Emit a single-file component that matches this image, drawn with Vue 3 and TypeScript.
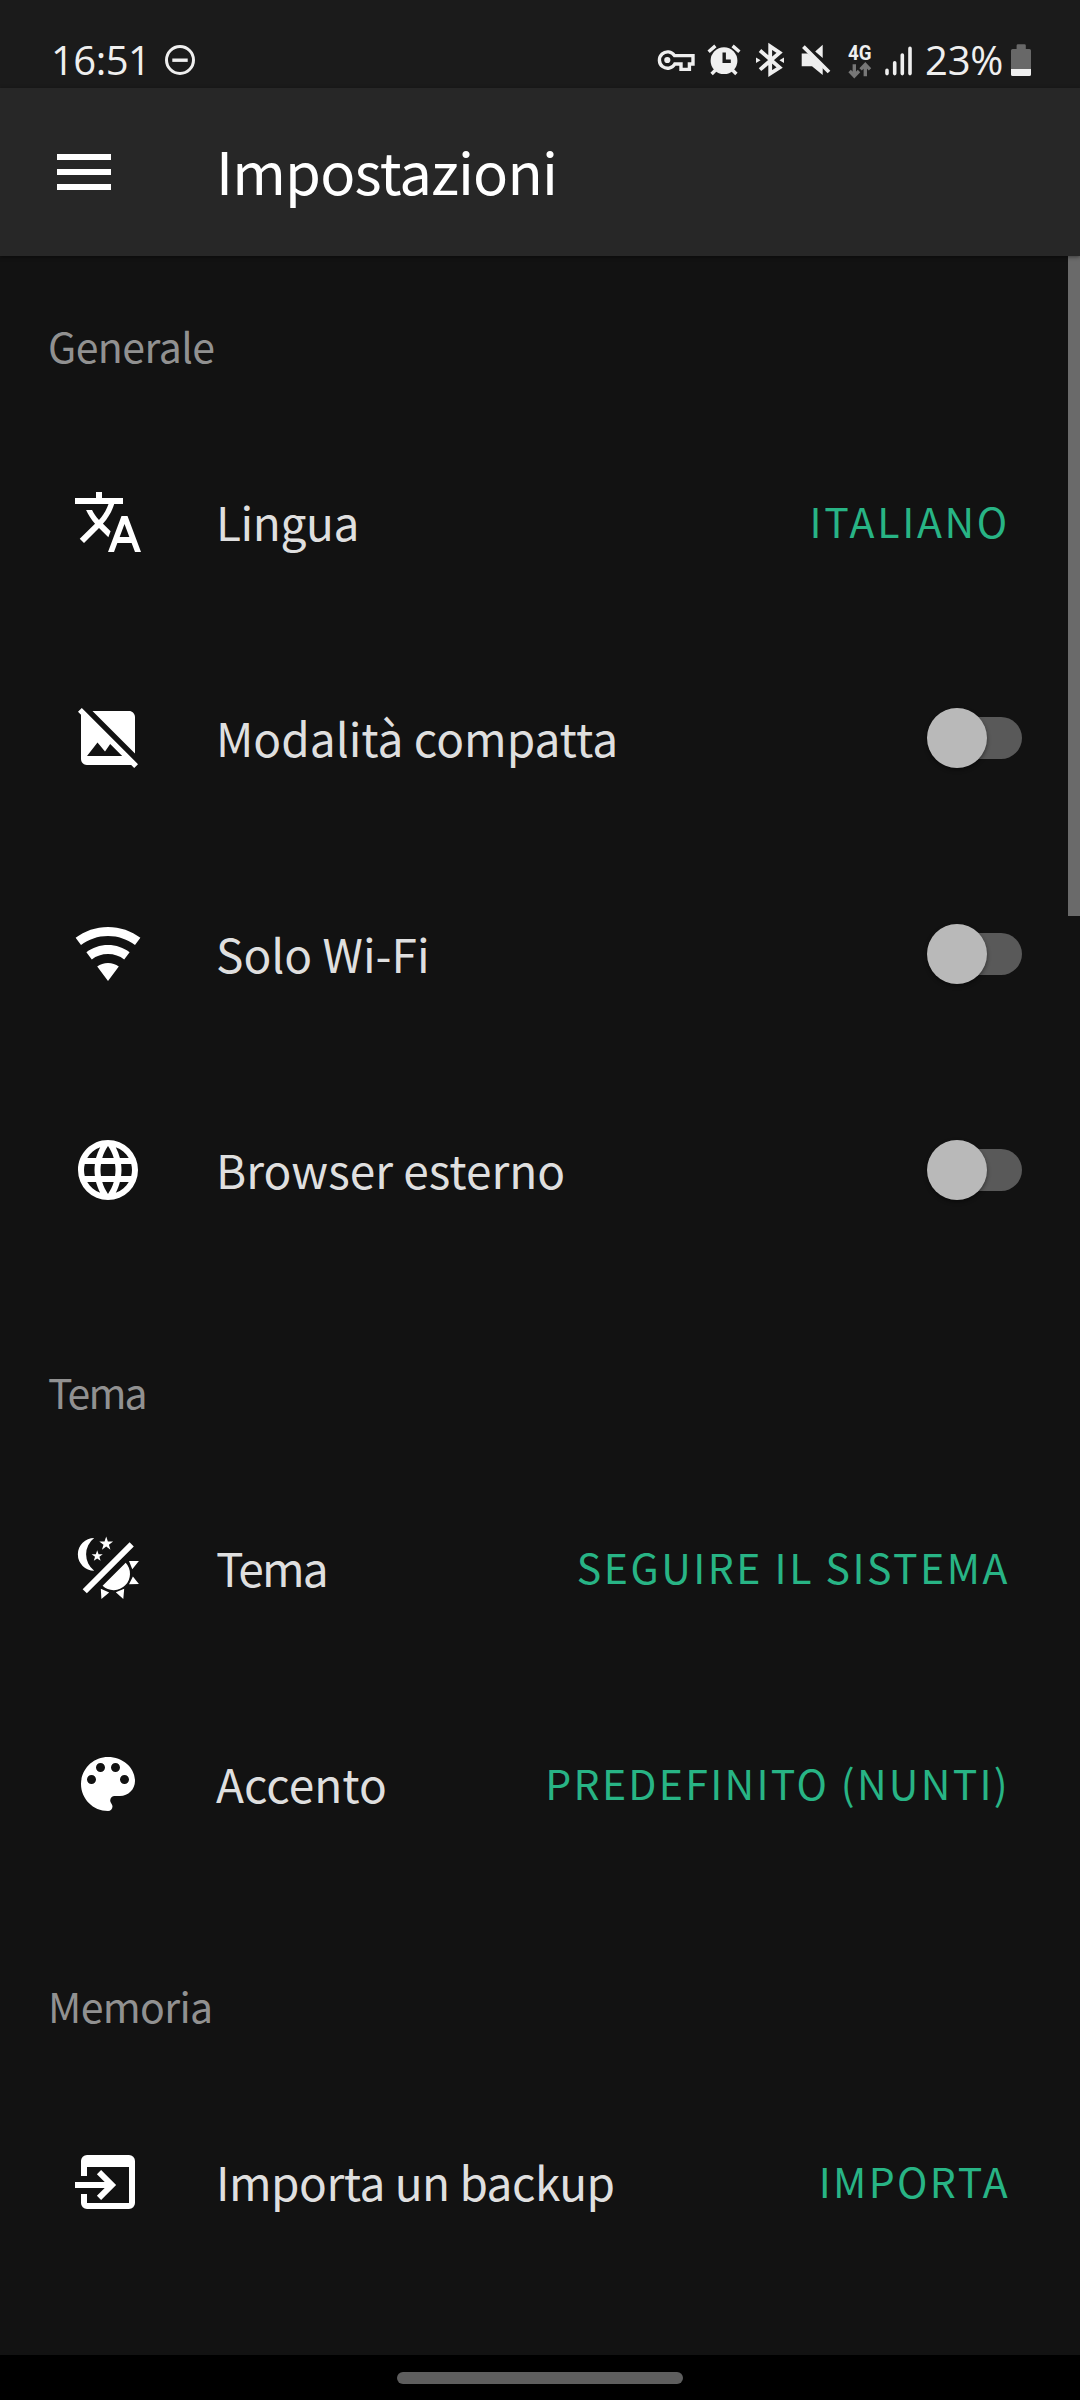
<script setup lang="ts">
import { ref } from 'vue'

interface Item {
  icon: string
  label: string
  tracking: number
  action?: string
  actionTracking?: number
}

interface Section {
  title: string
  tracking: number
  items: Item[]
}

const icons: Record<string, string> = {
  translate:
    'M12.87 15.07l-2.54-2.51.03-.03c1.74-1.94 2.98-4.17 3.71-6.53H17V4h-7V2H8v2H1v1.99h11.17C11.5 7.92 10.44 9.75 9 11.35 8.07 10.32 7.3 9.19 6.69 8h-2c.73 1.63 1.73 3.17 2.98 4.56l-5.09 5.02L4 19l5-5 3.11 3.11.76-2.04zM18.5 10h-2L12 22h2l1.12-3h4.75L21 22h2l-4.5-12zm-2.62 7l1.62-4.33L19.12 17h-3.24z',
  imageOff:
    'M2 3.27L3.27 2 22 20.73 20.73 22l-1-1H5c-1.1 0-2-.9-2-2V4.27zM5 18h11.73l-4-4L11 16.51 8.5 13.5zM6.83 3H19c1.1 0 2 .9 2 2v12.17z',
  wifi:
    'M12 21l3.6-4.8C14.6 15.45 13.35 15 12 15s-2.6.45-3.6 1.2L12 21M12 3C7.95 3 4.21 4.34 1.2 6.6L3 9c2.5-1.88 5.62-3 9-3s6.5 1.12 9 3l1.8-2.4C19.79 4.34 16.05 3 12 3M12 9c-2.7 0-5.19.89-7.2 2.4l1.8 2.4C8.1 12.67 9.97 12 12 12s3.9.67 5.4 1.8l1.8-2.4C17.19 9.89 14.7 9 12 9z',
  web:
    'M16.36,14C16.44,13.34 16.5,12.68 16.5,12C16.5,11.32 16.44,10.66 16.36,10H19.74C19.9,10.64 20,11.31 20,12C20,12.69 19.9,13.36 19.74,14M14.59,19.56C15.19,18.45 15.65,17.25 15.97,16H18.92C17.96,17.65 16.43,18.93 14.59,19.56M14.34,14H9.66C9.56,13.34 9.5,12.68 9.5,12C9.5,11.32 9.56,10.65 9.66,10H14.34C14.43,10.65 14.5,11.32 14.5,12C14.5,12.68 14.43,13.34 14.34,14M12,19.96C11.17,18.76 10.5,17.43 10.09,16H13.91C13.5,17.43 12.83,18.76 12,19.96M8,8H5.08C6.03,6.34 7.57,5.06 9.4,4.44C8.8,5.55 8.35,6.75 8,8M5.08,16H8C8.35,17.25 8.8,18.45 9.4,19.56C7.57,18.93 6.03,17.65 5.08,16M4.26,14C4.1,13.36 4,12.69 4,12C4,11.31 4.1,10.64 4.26,10H7.64C7.56,10.66 7.5,11.32 7.5,12C7.5,12.68 7.56,13.34 7.64,14M12,4.03C12.83,5.23 13.5,6.57 13.91,8H10.09C10.5,6.57 11.17,5.23 12,4.03M18.92,8H15.97C15.65,6.75 15.19,5.55 14.59,4.44C16.43,5.07 17.96,6.34 18.92,8M12,2C6.47,2 2,6.5 2,12A10,10 0 0,0 12,22A10,10 0 0,0 22,12A10,10 0 0,0 12,2Z',
  theme:
    'M7.4 2A5.45 5.45 0 0 0 7.4 12.9A6.85 6.85 0 0 1 7.4 2zM11.4 1.5l.56 1.65 1.74.02-1.4 1.04.52 1.67-1.42-1.01-1.42 1.01.52-1.67-1.4-1.04 1.74-.02zM8.4 6.1l.45 1.3 1.4.03-1.12.84.4 1.33-1.13-.8-1.13.8.4-1.33-1.12-.84 1.4-.03zM19.2 3.4l1.4 1.4L4.95 20.45l-1.4-1.4zM17.9 10.25A5.45 5.45 0 0 1 10.2 17.95zM19 9.7h3.3l-2.2 2.7zM20.3 14.8l2 2.5-3.3.1zM17.4 18.9l-.3 3.4-2.5-2.2zM9.6 18.9l2.8 1.3-2.6 2.1z',
  palette:
    'M12 3c-4.97 0-9 4.03-9 9s4.03 9 9 9c.83 0 1.5-.67 1.5-1.5 0-.39-.15-.74-.39-1.01-.23-.26-.38-.61-.38-.99 0-.83.67-1.5 1.5-1.5H16c2.76 0 5-2.24 5-5 0-4.42-4.03-8-9-8zm-5.5 9c-.83 0-1.5-.67-1.5-1.5S5.67 9 6.5 9 8 9.67 8 10.5 7.33 12 6.5 12zm3-4C8.67 8 8 7.33 8 6.5S8.67 5 9.5 5s1.5.67 1.5 1.5S10.33 8 9.5 8zm5 0c-.83 0-1.5-.67-1.5-1.5S13.67 5 14.5 5s1.5.67 1.5 1.5S15.33 8 14.5 8zm3 4c-.83 0-1.5-.67-1.5-1.5S16.67 9 17.5 9s1.5.67 1.5 1.5-.67 1.5-1.5 1.5z',
  importBox:
    'M21 5v14a2 2 0 0 1-2 2H5a2 2 0 0 1-2-2v-3h2v3h14V7H5v3H3V5a2 2 0 0 1 2-2h14a2 2 0 0 1 2 2zM1 12h9.9L8.3 9.4 9.7 8l5 5-5 5-1.4-1.4L10.9 14H1z'
}

const sections = ref<Section[]>([
  {
    title: 'Generale',
    tracking: -0.55,
    items: [
      { icon: 'translate', label: 'Lingua', tracking: -0.4, action: 'ITALIANO', actionTracking: 2.7 },
      { icon: 'imageOff', label: 'Modalità compatta', tracking: 0 },
      { icon: 'wifi', label: 'Solo Wi-Fi', tracking: 0 },
      { icon: 'web', label: 'Browser esterno', tracking: 0 }
    ]
  },
  {
    title: 'Tema',
    tracking: -1.9,
    items: [
      { icon: 'theme', label: 'Tema', tracking: -1.8, action: 'SEGUIRE IL SISTEMA', actionTracking: 2.5 },
      { icon: 'palette', label: 'Accento', tracking: 0, action: 'PREDEFINITO (NUNTI)', actionTracking: 2.3 }
    ]
  },
  {
    title: 'Memoria',
    tracking: -0.65,
    items: [{ icon: 'importBox', label: 'Importa un backup', tracking: -0.51, action: 'IMPORTA', actionTracking: 2.36 }]
  }
])
</script>

<template>
  <div class="screen">
    <header class="status">
      <span class="clock">16:51</span>
      <svg class="dnd" width="34" height="40" viewBox="163 40 34 40">
        <circle cx="180" cy="60" r="13.5" fill="none" stroke="#efefef" stroke-width="3" />
        <path d="M172.3 60.2h15.4" stroke="#efefef" stroke-width="3.4" />
      </svg>
      <div class="tray">
        <svg width="38" height="40" viewBox="657 40 38 40" fill="none" stroke="#efefef" stroke-width="3.4">
          <path d="M674.5 55.6H693V64H689.4V69.4H681V64H674.8A8.2 8.2 0 1 1 674.5 55.6z" />
          <circle cx="667.3" cy="60" r="3.1" fill="#efefef" stroke="none" />
        </svg>
        <svg class="alarm" width="34" height="40" viewBox="707 40 34 40" fill="none" stroke="#efefef" stroke-width="3.4">
          <circle cx="724" cy="60.7" r="13.4" fill="#efefef" stroke="none" />
          <path d="M708.6 51.8l6.8-5.9M739.4 51.8l-6.8-5.9M711.6 74l5-5M736.4 74l-5-5" />
          <path d="M724.2 52.4V61.3H730.8" stroke="#1b1b1b" />
        </svg>
        <svg class="bluetooth" width="30" height="40" viewBox="755 40 30 40" fill="none" stroke="#efefef" stroke-width="3.8">
          <path d="M760 50.5L779.6 67.6 770.2 73.6V46.4L779.6 52.6 760 69.6" />
          <path d="M756 57.4l4.6 2.8-4.6 2.8zM784 57.4l-4.6 2.8 4.6 2.8z" fill="#efefef" stroke="none" />
        </svg>
        <svg class="mute" width="31" height="40" viewBox="800 40 31 40" fill="#efefef">
          <path d="M801.7 53.5H808L822.7 67V75L812 66.2H801.7zM815.2 51.6L822.7 44.7V58z" />
          <path d="M803.4 46.6L829 72" stroke="#efefef" stroke-width="3.8" />
        </svg>
        <svg class="network" width="26" height="40" viewBox="847 40 26 40">
          <text x="848" y="59.8" textLength="23.5" lengthAdjust="spacingAndGlyphs" class="gen">4G</text>
          <path d="M854.3 64.2V75.5M849.6 71l4.7 5 4.7-5M865.3 76.2V65M860.6 69.4l4.7-5 4.7 5" fill="none" stroke="#777" stroke-width="3.4" />
        </svg>
        <svg class="signal" width="28" height="40" viewBox="885 40 28 40" stroke="#efefef" stroke-width="3.6" stroke-linecap="round">
          <path d="M887 70.4v3.2M894.7 62.8v10.8M902.3 55v18.6M910 48.4v25.2" />
        </svg>
        <span class="percent">23%</span>
        <svg class="battery" width="20" height="40" viewBox="1011 40 20 40">
          <path d="M1016.6 49v-3.4q0-1.4 1.4-1.4h6.4q1.4 0 1.4 1.4V49H1029.4q1.6 0 1.6 1.6V69H1011V50.6q0-1.6 1.6-1.6z" fill="#686868" />
          <path d="M1011 69h20v5.4q0 1.6-1.6 1.6h-16.8q-1.6 0-1.6-1.6z" fill="#efefef" />
        </svg>
      </div>
    </header>

    <div class="appbar">
      <svg class="menu" viewBox="0 0 24 24" fill="#fff"><path d="M3 6h18v2H3zM3 11h18v2H3zM3 16h18v2H3z" /></svg>
      <h1>Impostazioni</h1>
    </div>

    <main class="content">
      <section v-for="section in sections" :key="section.title">
        <h2 :style="{ letterSpacing: section.tracking + 'px' }">{{ section.title }}</h2>
        <div v-for="item in section.items" :key="item.label" class="row">
          <svg class="icon" viewBox="0 0 24 24" fill="#fff"><path :d="icons[item.icon]" fill-rule="evenodd" /></svg>
          <span class="label" :style="{ letterSpacing: item.tracking + 'px' }">{{ item.label }}</span>
          <span v-if="item.action" class="action" :style="{ letterSpacing: item.actionTracking + 'px' }">{{ item.action }}</span>
          <span v-else class="switch"><span class="thumb"></span></span>
        </div>
      </section>
      <div class="scrollbar"></div>
    </main>

    <footer class="navbar"><span class="pill"></span></footer>
  </div>
</template>

<style>
body {
  background: #121212;
}
</style>

<style scoped>
.screen {
  display: flex;
  flex-direction: column;
  width: 1080px;
  height: 2400px;
  overflow: hidden;
  background: #121212;
  font-family: "Noto Sans CJK JP", "Noto Sans", sans-serif;
}

svg {
  display: block;
  flex: none;
}

.status {
  display: flex;
  align-items: center;
  flex: none;
  height: 88px;
  padding: 32px 49px 0;
  box-sizing: border-box;
  background: #1b1b1b;
  color: #efefef;
  font-family: "Open Sans", sans-serif;
  font-size: 40px;
  line-height: 54px;
}

.clock {
  width: 112px;
  padding-left: 2px;
  letter-spacing: -0.5px;
}

.tray {
  display: flex;
  align-items: center;
  margin-left: auto;
}

.alarm { margin-left: 12px; }
.bluetooth { margin-left: 14px; }
.mute { margin-left: 15px; }
.network { margin-left: 16px; }
.signal { margin-left: 12px; }

.gen {
  font: 700 19.5px Roboto, sans-serif;
  fill: #efefef;
}

.percent {
  width: 86px;
  margin-left: 12px;
  letter-spacing: -0.2px;
  white-space: nowrap;
}

.appbar {
  display: flex;
  align-items: center;
  flex: none;
  height: 168px;
  padding-left: 48px;
  box-sizing: border-box;
  background: #272727;
  box-shadow: 0 1px 4px rgba(0, 0, 0, 0.45);
  z-index: 1;
}

.menu {
  width: 72px;
  height: 72px;
}

h1 {
  margin: 0 0 0 96px;
  padding-bottom: 4px;
  color: #fff;
  font-size: 58px;
  font-weight: 400;
  line-height: 84px;
  letter-spacing: -0.8px;
}

.content {
  position: relative;
  flex: 1;
}

h2 {
  margin: 0;
  padding: 80px 0 36px 48px;
  color: #919191;
  font-size: 41px;
  font-weight: 400;
  line-height: 66px;
}

section:first-child h2 {
  padding-top: 56px;
}

.row {
  display: flex;
  align-items: center;
  height: 216px;
  padding: 0 70px 0 72px;
}

.icon {
  width: 72px;
  height: 72px;
}

.label {
  margin-left: 72px;
  padding-bottom: 2px;
  color: #dfdfdf;
  font-size: 46px;
  line-height: 66px;
}

.action {
  margin-left: auto;
  padding-bottom: 4px;
  color: #28b485;
  font-size: 41px;
  line-height: 60px;
  white-space: nowrap;
}

.switch {
  display: flex;
  align-items: center;
  width: 92px;
  height: 42px;
  margin-left: auto;
  margin-right: -12px;
  border-radius: 21px;
  background: #595959;
}

.thumb {
  flex: none;
  width: 60px;
  height: 60px;
  margin-left: -3.5px;
  border-radius: 50%;
  background: #b9b9b9;
  box-shadow: 0 2px 4px rgba(0, 0, 0, 0.45);
}

.scrollbar {
  position: absolute;
  top: 0;
  right: 0;
  width: 12px;
  height: 660px;
  background: #6a6a6a;
}

.navbar {
  display: flex;
  justify-content: center;
  align-items: center;
  flex: none;
  height: 45px;
  background: #000;
}

.pill {
  width: 286px;
  height: 12px;
  border-radius: 6px;
  background: #5e5e5e;
}
</style>
